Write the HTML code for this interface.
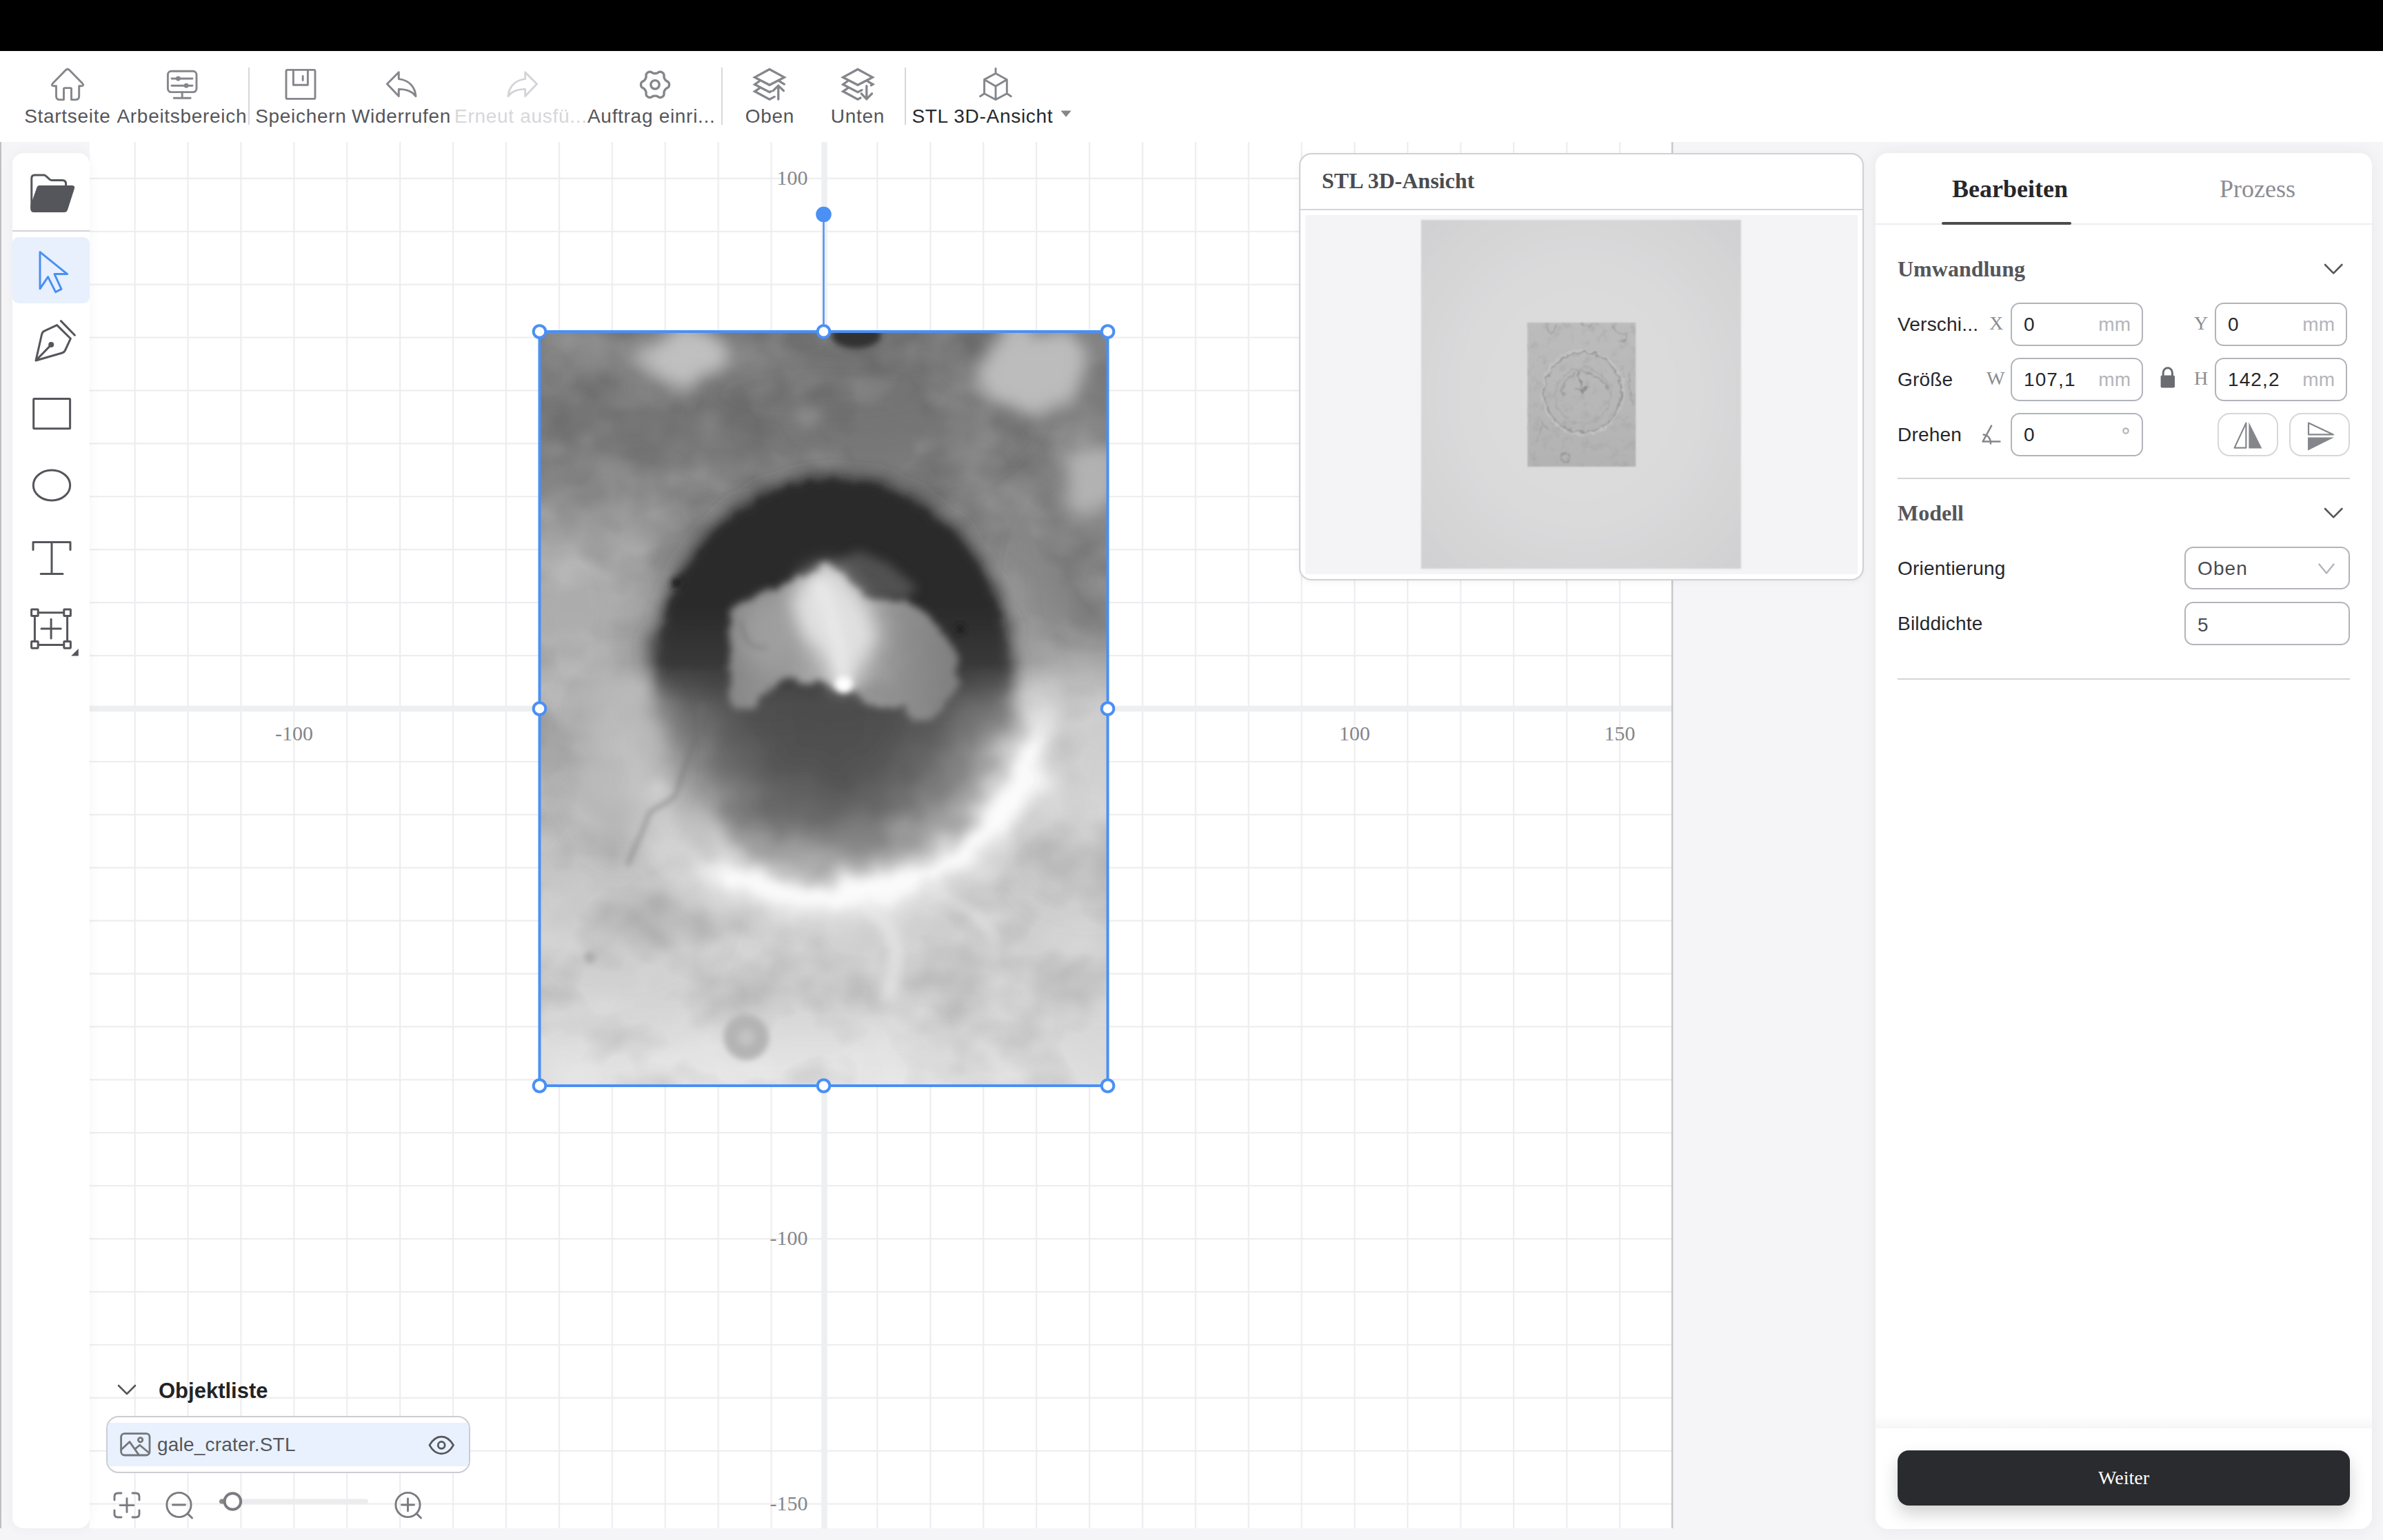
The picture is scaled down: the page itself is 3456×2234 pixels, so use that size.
<!DOCTYPE html>
<html lang="de">
<head>
<meta charset="utf-8">
<title>STL 3D-Ansicht</title>
<style>
*{box-sizing:border-box;margin:0;padding:0}
html,body{width:3456px;height:2234px;overflow:hidden;background:#f5f5f7;font-family:"Liberation Sans",sans-serif;color:#2b2c30}
.abs{position:absolute}
#titlebar{position:absolute;left:0;top:0;width:3456px;height:74px;background:#000}
#toolbar{position:absolute;left:0;top:74px;width:3456px;height:132px;background:#fff}
.tb{position:absolute;top:0;height:132px;width:220px;margin-left:-110px;text-align:center}
.tb svg{position:absolute;left:50%;top:22px;margin-left:-26px;width:52px;height:52px;overflow:visible}
.tb span{position:absolute;left:0;right:0;top:78px;font-size:28px;line-height:34px;color:#55565b;white-space:nowrap;letter-spacing:0.7px;text-indent:0.7px}
.tb.dis span{color:#d6d7db}
.tb.dark span{color:#26272b}
.sep{position:absolute;top:24px;width:2.4px;height:83px;background:#d6d7db}
#canvas{position:absolute;left:130px;top:206px;width:2297px;height:2011px;background:#fff;overflow:hidden}
#leftedge{position:absolute;left:0;top:206px;width:2.4px;height:2011px;background:#c0c0c3}
#sidebar{position:absolute;left:18px;top:222px;width:112px;height:1995px;background:#fff;border-radius:16px;box-shadow:0 0 18px rgba(0,0,0,0.045)}
#sidebar svg{position:absolute;overflow:visible}
#view3d{position:absolute;left:1884px;top:222px;width:819px;height:620px;background:#fff;border:2px solid #cfd1d6;border-radius:18px;box-shadow:0 2px 10px rgba(0,0,0,0.05);overflow:hidden}
#view3d h3{position:absolute;left:31px;top:18px;font-family:"Liberation Serif",serif;font-weight:bold;font-size:32px;line-height:40px;color:#4b4c51}
#view3d .hr{position:absolute;left:0;right:0;top:79px;height:2px;background:#d3d5d9}
#view3d .inner{position:absolute;left:7px;top:88px;width:801px;height:521px;background:#f4f4f6}
#rpanel{position:absolute;left:2720px;top:222px;width:720px;height:1996px;background:#fff;border-radius:18px;box-shadow:0 0 24px rgba(0,0,0,0.06)}
.serif{font-family:"Liberation Serif",serif}
#rpanel .tab1{position:absolute;left:111px;top:30px;font-family:"Liberation Serif",serif;font-weight:bold;font-size:36px;line-height:44px;color:#26272b}
#rpanel .tab2{position:absolute;left:499px;top:30px;font-family:"Liberation Serif",serif;font-size:36px;line-height:44px;color:#8b8c91}
#rpanel .tabline{position:absolute;left:0;right:0;top:102px;height:2px;background:#ededef}
#rpanel .tabul{position:absolute;left:96px;top:100px;width:188px;height:4px;background:#4a4b50;border-radius:2px}
.sect{position:absolute;left:32px;font-family:"Liberation Serif",serif;font-weight:bold;font-size:32px;line-height:40px;color:#55565b}
.lbl{position:absolute;left:32px;font-size:28px;line-height:34px;color:#26272b;white-space:nowrap;letter-spacing:0.2px}
.axis{position:absolute;font-family:"Liberation Serif",serif;font-size:28px;line-height:34px;color:#8b8c91}
.inp{position:absolute;height:63px;border:2px solid #b2b4ba;border-radius:13px;background:#fff}
.inp .v{position:absolute;left:17px;top:13px;font-size:28px;line-height:34px;color:#26272b;letter-spacing:1.1px}
.inp .u{position:absolute;right:16px;top:13px;font-size:28px;line-height:34px;color:#b3b5bb}
.btn{position:absolute;height:63px;width:88px;border:2px solid #d6d7db;border-radius:18px;background:#fff}
.hr2{position:absolute;left:32px;width:656px;height:2px;background:#d3d5d9}
#weiter{position:absolute;left:32px;top:1882px;width:656px;height:80px;background:#2a2b2e;border-radius:16px;color:#fff;font-family:"Liberation Serif",serif;font-size:28px;line-height:80px;text-align:center;box-shadow:0 12px 24px rgba(0,0,0,0.18)}
#footshadow{position:absolute;left:0;right:0;top:1830px;height:20px;background:linear-gradient(to bottom,rgba(0,0,0,0),rgba(0,0,0,0.035))}
#objtitle{position:absolute;left:230px;top:1997.5px;font-size:31px;line-height:40px;font-weight:bold;color:#222326}
#objbox{position:absolute;left:154px;top:2054px;width:528px;height:83px;border:2px solid #cbcdd2;border-radius:18px;background:#fff;overflow:hidden}
#objbox .row{position:absolute;left:0;right:0;top:8px;height:63px;background:#e8f1fd}
#objbox .name{position:absolute;left:72px;top:22px;font-size:28px;line-height:36px;color:#55565b;letter-spacing:0.2px}
</style>
</head>
<body>
<div id="titlebar"></div>
<div id="toolbar">
  <div class="tb " style="left:98.0px"><svg viewBox="-26 -26 52 52" fill="none" stroke="#85868b" stroke-width="2.9" stroke-linecap="round" stroke-linejoin="round"><path d="M-21.6 -1 L-2.8 -20.3 Q0 -23 2.8 -20.3 L21.6 -1 Q24.4 2.7 20 2.7 H16.7 V17.4 Q16.7 22.6 11.5 22.6 H5.5 V7 Q5.5 5.6 4.1 5.6 H-4.1 Q-5.5 5.6 -5.5 7 V22.6 H-11.3 Q-16.5 22.6 -16.5 17.4 V2.7 H-20 Q-24.4 2.7 -21.6 -1 Z"/></svg><span style="left:-0.5px;right:0.5px">Startseite</span></div>
<div class="tb " style="left:264.0px"><svg viewBox="-26 -26 52 52" fill="none" stroke="#85868b" stroke-width="2.9" stroke-linecap="round" stroke-linejoin="round"><rect x="-20.6" y="-18.8" width="41.6" height="30.4" rx="5"/><path d="M0.2 11.6 V20.2 M-11.8 20.2 H12.2 M-15 -8 H15 M-15 2.2 H15"/><circle cx="-5.6" cy="-8" r="3.4" fill="#85868b" stroke="none"/><circle cx="6.2" cy="2.2" r="3.4" fill="#85868b" stroke="none"/></svg><span style="left:-0.5px;right:0.5px">Arbeitsbereich</span></div>
<div class="tb " style="left:436.0px"><svg viewBox="-26 -26 52 52" fill="none" stroke="#85868b" stroke-width="2.9" stroke-linecap="round" stroke-linejoin="round"><rect x="-21" y="-20.6" width="42" height="42" rx="2"/><path d="M-10.6 -20.6 V1.2 H10.4 V-20.6 M3.2 -11.6 V-5.4"/></svg><span style="left:0.0px;right:0.0px">Speichern</span></div>
<div class="tb " style="left:582.0px"><svg viewBox="-26 -26 52 52" fill="none" stroke="#85868b" stroke-width="2.9" stroke-linecap="round" stroke-linejoin="round"><path d="M-3.7 -17.2 L-20.6 -0.2 L-3.7 17.6 V7.4 C8 7.4 16 10.5 21 17.6 C20 4 11 -6 -3.7 -7.4 Z"/></svg><span style="left:-0.4px;right:0.4px">Widerrufen</span></div>
<div class="tb dis" style="left:758.0px"><svg viewBox="-26 -26 52 52" fill="none" stroke="#d3d4d8" stroke-width="2.9" stroke-linecap="round" stroke-linejoin="round"><path d="M3.7 -17.2 L20.6 -0.2 L3.7 17.6 V7.4 C-8 7.4 -16 10.5 -21 17.6 C-20 4 -11 -6 3.7 -7.4 Z"/></svg><span style="left:-3.0px;right:3.0px">Erneut ausf&uuml;...</span></div>
<div class="tb " style="left:950.0px"><svg viewBox="-26 -26 52 52" fill="none" stroke="#85868b" stroke-width="2.9" stroke-linecap="round" stroke-linejoin="round"><g stroke-width="3.4" transform="translate(0 0.8)"><path d="M20.50 0.00 L20.47 0.71 L20.37 1.42 L20.20 2.12 L19.91 2.80 L19.49 3.44 L18.91 4.02 L18.17 4.53 L17.37 4.98 L16.62 5.40 L15.98 5.82 L15.48 6.25 L15.07 6.71 L14.72 7.18 L14.41 7.66 L14.12 8.15 L13.84 8.65 L13.58 9.16 L13.34 9.69 L13.15 10.28 L13.03 10.93 L12.98 11.69 L13.00 12.55 L13.01 13.47 L12.93 14.36 L12.72 15.16 L12.38 15.85 L11.94 16.43 L11.42 16.93 L10.85 17.37 L10.25 17.75 L9.62 18.08 L8.95 18.36 L8.26 18.55 L7.53 18.64 L6.77 18.60 L5.97 18.38 L5.16 18.00 L4.37 17.53 L3.63 17.09 L2.95 16.75 L2.32 16.53 L1.72 16.40 L1.14 16.34 L0.57 16.31 L0.00 16.30 L-0.57 16.31 L-1.14 16.34 L-1.72 16.40 L-2.32 16.53 L-2.95 16.75 L-3.63 17.09 L-4.37 17.53 L-5.16 18.00 L-5.97 18.38 L-6.77 18.60 L-7.53 18.64 L-8.26 18.55 L-8.95 18.36 L-9.62 18.08 L-10.25 17.75 L-10.85 17.37 L-11.42 16.93 L-11.94 16.43 L-12.38 15.85 L-12.72 15.16 L-12.93 14.36 L-13.01 13.47 L-13.00 12.55 L-12.98 11.69 L-13.03 10.93 L-13.15 10.28 L-13.34 9.69 L-13.58 9.16 L-13.84 8.65 L-14.12 8.15 L-14.41 7.66 L-14.72 7.18 L-15.07 6.71 L-15.48 6.25 L-15.98 5.82 L-16.62 5.40 L-17.37 4.98 L-18.17 4.53 L-18.91 4.02 L-19.49 3.44 L-19.91 2.80 L-20.20 2.12 L-20.37 1.42 L-20.47 0.71 L-20.50 0.00 L-20.47 -0.71 L-20.37 -1.42 L-20.20 -2.12 L-19.91 -2.80 L-19.49 -3.44 L-18.91 -4.02 L-18.17 -4.53 L-17.37 -4.98 L-16.62 -5.40 L-15.98 -5.82 L-15.48 -6.25 L-15.07 -6.71 L-14.72 -7.18 L-14.41 -7.66 L-14.12 -8.15 L-13.84 -8.65 L-13.58 -9.16 L-13.34 -9.69 L-13.15 -10.28 L-13.03 -10.93 L-12.98 -11.69 L-13.00 -12.55 L-13.01 -13.47 L-12.93 -14.36 L-12.72 -15.16 L-12.38 -15.85 L-11.94 -16.43 L-11.42 -16.93 L-10.85 -17.37 L-10.25 -17.75 L-9.62 -18.08 L-8.95 -18.36 L-8.26 -18.55 L-7.53 -18.64 L-6.77 -18.60 L-5.97 -18.38 L-5.16 -18.00 L-4.37 -17.53 L-3.63 -17.09 L-2.95 -16.75 L-2.32 -16.53 L-1.72 -16.40 L-1.14 -16.34 L-0.57 -16.31 L-0.00 -16.30 L0.57 -16.31 L1.14 -16.34 L1.72 -16.40 L2.32 -16.53 L2.95 -16.75 L3.63 -17.09 L4.37 -17.53 L5.16 -18.00 L5.97 -18.38 L6.77 -18.60 L7.53 -18.64 L8.26 -18.55 L8.95 -18.36 L9.62 -18.08 L10.25 -17.75 L10.85 -17.37 L11.42 -16.93 L11.94 -16.43 L12.38 -15.85 L12.72 -15.16 L12.93 -14.36 L13.01 -13.47 L13.00 -12.55 L12.98 -11.69 L13.03 -10.93 L13.15 -10.28 L13.34 -9.69 L13.58 -9.16 L13.84 -8.65 L14.12 -8.15 L14.41 -7.66 L14.72 -7.18 L15.07 -6.71 L15.48 -6.25 L15.98 -5.82 L16.62 -5.40 L17.37 -4.98 L18.17 -4.53 L18.91 -4.02 L19.49 -3.44 L19.91 -2.80 L20.20 -2.12 L20.37 -1.42 L20.47 -0.71Z"/><circle cx="0" cy="0" r="6.2"/></g></svg><span style="left:-5.6px;right:5.6px">Auftrag einri...</span></div>
<div class="tb " style="left:1116.0px"><svg viewBox="-26 -26 52 52" fill="none" stroke="#85868b" stroke-width="2.9" stroke-linecap="round" stroke-linejoin="round"><g stroke-width="3.3" stroke-linejoin="miter"><path d="M0 -21.5 L21.4 -9.9 L0 1.3 L-21.4 -9.9 Z M-14.4 -4.5 L-21.4 0.5 L0 11.7 L2.2 10.5 M14.3 -4.1 L21.4 0.1 M-14.4 5.9 L-21.4 10.5 L0 22.1 L7.2 18.4 M12.8 22.1 V3 M5.2 9.6 L12.8 2.2 L20.5 9.6"/></g></svg><span style="left:0.0px;right:0.0px">Oben</span></div>
<div class="tb " style="left:1244.0px"><svg viewBox="-26 -26 52 52" fill="none" stroke="#85868b" stroke-width="2.9" stroke-linecap="round" stroke-linejoin="round"><g stroke-width="3.3" stroke-linejoin="miter"><path d="M0 -21.5 L21.4 -9.9 L0 1.3 L-21.4 -9.9 Z M-14.4 -4.5 L-21.4 0.5 L0 11.7 L6 8.6 M14.3 -4.1 L21.8 0.3 L19.3 1.7 M-14.4 5.9 L-21.4 10.5 L0 22.1 L3.9 20 M12.8 2.6 V21.7 M5.2 13.8 L12.8 21.7 L20.5 13.8"/></g></svg><span style="left:-0.4px;right:0.4px">Unten</span></div>
<div class="tb dark" style="left:1444.0px"><svg viewBox="-26 -26 52 52" fill="none" stroke="#85868b" stroke-width="2.9" stroke-linecap="round" stroke-linejoin="round"><path d="M0 -15.5 L16.3 -6.6 V13.8 L0 22.5 L-16.5 13.8 V-6.6 Z M-16.5 -6.6 L0 3 L16.3 -6.6 M0 3 V22.5 M0 -22.6 V-15.5 M16.3 13.8 L22.3 17.7 M-16.5 13.8 L-22.5 17.7"/></svg><span style="left:-19.5px;right:19.5px">STL 3D-Ansicht</span><svg style="left:204.0px;top:86px;width:16px;height:10px;margin:0" viewBox="0 0 16 10"><path d="M0.4 0.4 H15.6 L8 9.8 Z" fill="#85868b" stroke="none"/></svg></div>
<div class="sep" style="left:359.5px"></div><div class="sep" style="left:1045.5px"></div><div class="sep" style="left:1311.5px"></div>
</div>
<div id="canvas">
  <svg class="abs" style="left:0;top:0" width="2297" height="2011" viewBox="130 206 2297 2011">
<defs><pattern id="grid" patternUnits="userSpaceOnUse" x="1194.40" y="1026.90" width="76.91" height="76.91"><rect x="0" y="0" width="2.2" height="76.91" fill="#ededf0"/><rect x="0" y="0" width="76.91" height="2.2" fill="#ededf0"/></pattern></defs>
<rect x="0" y="206" width="2424" height="2011" fill="#fff"/>
<rect x="0" y="206" width="2424" height="2011" fill="url(#grid)"/>
<rect x="0" y="1023.7" width="2424" height="8.6" fill="#eeeff1"/>
<rect x="1191.2" y="206" width="8.6" height="2011" fill="#eeeff1"/>
<rect x="2424" y="206" width="2.6" height="2011" fill="#c6c8cd"/>
<text x="426.4" y="1074" text-anchor="middle" style="font-family:'Liberation Serif',serif;font-size:30px;fill:#85868b">-100</text>
<text x="1964.6" y="1074" text-anchor="middle" style="font-family:'Liberation Serif',serif;font-size:30px;fill:#85868b">100</text>
<text x="2349.1" y="1074" text-anchor="middle" style="font-family:'Liberation Serif',serif;font-size:30px;fill:#85868b">150</text>
<text x="1171.5" y="267.9" text-anchor="end" style="font-family:'Liberation Serif',serif;font-size:30px;fill:#85868b">100</text>
<text x="1171.5" y="1806.1" text-anchor="end" style="font-family:'Liberation Serif',serif;font-size:30px;fill:#85868b">-100</text>
<text x="1171.5" y="2190.6" text-anchor="end" style="font-family:'Liberation Serif',serif;font-size:30px;fill:#85868b">-150</text>
<defs>
<clipPath id="cclip"><rect x="0" y="0" width="825" height="1094"/></clipPath>
<linearGradient id="cbg" x1="0" y1="0" x2="0" y2="1">
<stop offset="0" stop-color="#767676"/><stop offset="0.18" stop-color="#7e7e7e"/><stop offset="0.45" stop-color="#989898"/><stop offset="0.62" stop-color="#b6b6b6"/><stop offset="0.75" stop-color="#cbcbcb"/><stop offset="1" stop-color="#dcdcdc"/>
</linearGradient>
<linearGradient id="cbowl" gradientUnits="userSpaceOnUse" x1="0" y1="211" x2="0" y2="800">
<stop offset="0" stop-color="#3a3a3a"/><stop offset="0.5" stop-color="#444"/><stop offset="0.72" stop-color="#525252"/><stop offset="0.83" stop-color="#6a6a6a"/><stop offset="0.9" stop-color="#8a8a8a"/><stop offset="0.95" stop-color="#aaa"/><stop offset="1" stop-color="#c8c8c8"/>
</linearGradient>
<linearGradient id="cringfade" gradientUnits="userSpaceOnUse" x1="0" y1="395" x2="0" y2="535">
<stop offset="0" stop-color="#fff"/><stop offset="1" stop-color="#000"/>
</linearGradient>
<mask id="cringmask" maskUnits="userSpaceOnUse" x="0" y="0" width="825" height="1094"><rect x="0" y="0" width="825" height="1094" fill="url(#cringfade)"/></mask>
<linearGradient id="cmound" gradientUnits="userSpaceOnUse" x1="273" y1="0" x2="616" y2="0">
<stop offset="0" stop-color="#868686"/><stop offset="0.25" stop-color="#989898"/><stop offset="0.45" stop-color="#b4b4b4"/><stop offset="0.6" stop-color="#a4a4a4"/><stop offset="0.75" stop-color="#8e8e8e"/><stop offset="1" stop-color="#7c7c7c"/>
</linearGradient>
<radialGradient id="clow">
<stop offset="0" stop-color="#4e4e4e"/><stop offset="0.24" stop-color="#525252"/><stop offset="0.43" stop-color="#686868"/><stop offset="0.55" stop-color="#868686"/><stop offset="0.65" stop-color="#a8a8a8"/><stop offset="0.72" stop-color="#d0d0d0"/><stop offset="0.775" stop-color="#fcfcfc"/><stop offset="0.815" stop-color="#fafafa"/><stop offset="0.87" stop-color="#e2e2e2" stop-opacity="0.9"/><stop offset="1" stop-color="#d4d4d4" stop-opacity="0"/>
</radialGradient>
<linearGradient id="clowfade" gradientUnits="userSpaceOnUse" x1="0" y1="480" x2="0" y2="610">
<stop offset="0" stop-color="#000"/><stop offset="1" stop-color="#fff"/>
</linearGradient>
<mask id="clowmask" maskUnits="userSpaceOnUse" x="0" y="0" width="825" height="1094"><rect x="0" y="0" width="825" height="1094" fill="url(#clowfade)"/></mask>
<filter id="cb4" filterUnits="userSpaceOnUse" x="-60" y="-60" width="945" height="1214"><feGaussianBlur stdDeviation="4"/></filter>
<filter id="cb8" filterUnits="userSpaceOnUse" x="-60" y="-60" width="945" height="1214"><feGaussianBlur stdDeviation="8"/></filter>
<filter id="cb14" filterUnits="userSpaceOnUse" x="-60" y="-60" width="945" height="1214"><feGaussianBlur stdDeviation="14"/></filter>
<filter id="cb25" filterUnits="userSpaceOnUse" x="-100" y="-100" width="1025" height="1294"><feGaussianBlur stdDeviation="25"/></filter>
<filter id="cb40" filterUnits="userSpaceOnUse" x="-150" y="-150" width="1125" height="1394"><feGaussianBlur stdDeviation="40"/></filter>
<filter id="crough" filterUnits="userSpaceOnUse" x="-60" y="-60" width="945" height="1214"><feTurbulence type="fractalNoise" baseFrequency="0.05" numOctaves="3" seed="7" result="n"/><feDisplacementMap in="SourceGraphic" in2="n" scale="22" xChannelSelector="R" yChannelSelector="G"/><feGaussianBlur stdDeviation="3"/></filter>
<filter id="crough5" filterUnits="userSpaceOnUse" x="-60" y="-60" width="945" height="1214"><feTurbulence type="fractalNoise" baseFrequency="0.06" numOctaves="3" seed="7" result="n"/><feDisplacementMap in="SourceGraphic" in2="n" scale="20" xChannelSelector="R" yChannelSelector="G"/><feGaussianBlur stdDeviation="5.5"/></filter>
<filter id="croughL" filterUnits="userSpaceOnUse" x="-60" y="-60" width="945" height="1214"><feTurbulence type="fractalNoise" baseFrequency="0.022" numOctaves="3" seed="29" result="n"/><feDisplacementMap in="SourceGraphic" in2="n" scale="48" xChannelSelector="R" yChannelSelector="G"/><feGaussianBlur stdDeviation="7"/></filter>
<filter id="crough14" filterUnits="userSpaceOnUse" x="-60" y="-60" width="945" height="1214"><feTurbulence type="fractalNoise" baseFrequency="0.03" numOctaves="3" seed="3" result="n"/><feDisplacementMap in="SourceGraphic" in2="n" scale="30" xChannelSelector="R" yChannelSelector="G"/><feGaussianBlur stdDeviation="12"/></filter>
<filter id="crough2" filterUnits="userSpaceOnUse" x="-60" y="-60" width="945" height="1214"><feTurbulence type="fractalNoise" baseFrequency="0.03" numOctaves="3" seed="11" result="n"/><feDisplacementMap in="SourceGraphic" in2="n" scale="40" xChannelSelector="R" yChannelSelector="G"/><feGaussianBlur stdDeviation="7"/></filter>
<filter id="crough3" filterUnits="userSpaceOnUse" x="-60" y="-60" width="945" height="1214"><feTurbulence type="fractalNoise" baseFrequency="0.02" numOctaves="3" seed="17" result="n"/><feDisplacementMap in="SourceGraphic" in2="n" scale="55" xChannelSelector="R" yChannelSelector="G"/><feGaussianBlur stdDeviation="13"/></filter>
<filter id="ctex" filterUnits="userSpaceOnUse" x="0" y="0" width="825" height="1094"><feTurbulence type="fractalNoise" baseFrequency="0.009 0.011" numOctaves="3" seed="5"/><feColorMatrix type="matrix" values="0 0 0 0 1  0 0 0 0 1  0 0 0 0 1  1.8 0 0 0 -0.72"/></filter>
<filter id="ctexd" filterUnits="userSpaceOnUse" x="0" y="0" width="825" height="1094"><feTurbulence type="fractalNoise" baseFrequency="0.009 0.011" numOctaves="3" seed="23"/><feColorMatrix type="matrix" values="0 0 0 0 0  0 0 0 0 0  0 0 0 0 0  1.8 0 0 0 -0.72"/></filter>
</defs>
<g transform="translate(782.5 481)" clip-path="url(#cclip)">
<rect x="0" y="0" width="825" height="1094" fill="url(#cbg)"/>
<!-- regional variation -->
<g filter="url(#cb40)">
<ellipse cx="50" cy="420" rx="120" ry="190" fill="#b2b2b2" opacity="0.85"/>
<ellipse cx="800" cy="640" rx="90" ry="150" fill="#dadada" opacity="0.8"/>
<ellipse cx="420" cy="90" rx="260" ry="100" fill="#727272" opacity="0.7"/>
<ellipse cx="800" cy="360" rx="50" ry="90" fill="#757575" opacity="0.8"/>
<ellipse cx="400" cy="1095" rx="400" ry="60" fill="#e8e8e8" opacity="0.8"/>
<ellipse cx="130" cy="830" rx="90" ry="80" fill="#c2c2c2" opacity="0.6"/>
<ellipse cx="20" cy="60" rx="90" ry="120" fill="#7a7a7a" opacity="0.7"/>
</g>
<rect x="0" y="0" width="825" height="1094" filter="url(#ctex)" opacity="0.22"/>
<rect x="0" y="0" width="825" height="1094" filter="url(#ctexd)" opacity="0.16"/>
<g filter="url(#crough3)">
<ellipse cx="212" cy="38" rx="62" ry="44" fill="#c0c0c0"/>
<ellipse cx="715" cy="55" rx="78" ry="66" fill="#bcbcbc"/>
<ellipse cx="803" cy="215" rx="36" ry="55" fill="#b2b2b2"/>
<ellipse cx="385" cy="120" rx="30" ry="16" fill="#969696"/>
<ellipse cx="240" cy="140" rx="14" ry="22" fill="#999"/>
</g>
<ellipse cx="459" cy="6" rx="36" ry="18" fill="#333" filter="url(#cb4)"/>
<!-- outer rim glow -->
<g filter="url(#crough3)" fill="none">
<path d="M150 470 A290 305 0 0 1 710 470" stroke="#9a9a9a" stroke-width="30" opacity="0.8"/>
</g>
<!-- bowl floor (soft) -->
<ellipse cx="426" cy="503" rx="266" ry="296" fill="url(#cbowl)" filter="url(#crough14)"/>
<g mask="url(#clowmask)"><ellipse cx="420" cy="560" rx="378" ry="328" fill="url(#clow)" filter="url(#croughL)"/></g>
<ellipse cx="205" cy="725" rx="75" ry="45" fill="#bcbcbc" opacity="0.65" filter="url(#cb14)" transform="rotate(35 205 725)"/>
<ellipse cx="118" cy="620" rx="60" ry="130" fill="#b0b0b0" opacity="0.8" filter="url(#cb25)"/>
<path d="M478 832 C520 870 525 900 505 962" stroke="#e8e8e8" stroke-width="22" fill="none" stroke-linecap="round" filter="url(#cb8)" opacity="0.7"/>
<path d="M560 800 C600 830 640 840 660 880" stroke="#e6e6e6" stroke-width="16" fill="none" stroke-linecap="round" filter="url(#cb8)" opacity="0.6"/>
<!-- dark horseshoe ring (sharper) -->
<g mask="url(#cringmask)"><ellipse cx="426" cy="502" rx="255" ry="286" fill="#2c2c2c" filter="url(#crough5)"/></g>
<!-- mound -->
<path d="M430 335 L477 388 L529 388 L548 372 L505 336 L462 318 Z" fill="#525252" filter="url(#cb8)" opacity="0.95"/>
<g filter="url(#crough5)">
<path d="M276 403 L276 527 L286 549 L311 545 L326 524 L342 508 L363 503 L384 511 L404 507 L440 515 L467 531 L488 541 L508 545 L525 539 L540 566 L580 556 L612 507 L602 465 L571 416 L529 388 L477 388 L448 362 L425 340 L415 335 L400 350 L363 362 L321 379 L290 394 Z" fill="url(#cmound)"/>
</g>
<path d="M388 352 L425 338 L474 396 L492 444 L466 486 L450 518 L430 518 L414 474 L376 438 L362 394 Z" fill="#e0e0e0" filter="url(#cb14)"/>
<ellipse cx="330" cy="440" rx="40" ry="50" fill="#a6a6a6" opacity="0.6" filter="url(#cb14)"/>
<path d="M405 368 C420 400 432 440 441 508" stroke="#f0f0f0" stroke-width="16" fill="none" stroke-linecap="round" filter="url(#cb8)" opacity="0.6"/>
<ellipse cx="441" cy="512" rx="13" ry="12" fill="#fff" filter="url(#cb4)"/>
<ellipse cx="495" cy="525" rx="34" ry="16" fill="#8c8c8c" opacity="0.7" filter="url(#cb8)"/>
<path d="M292 420 C296 450 310 462 330 458" stroke="#5a5a5a" stroke-width="2.2" fill="none" filter="url(#cb4)" opacity="0.7"/>
<!-- small features -->
<circle cx="300" cy="1024" r="33" fill="#b4b4b4" filter="url(#cb4)"/>
<circle cx="300" cy="1024" r="12" fill="#c2c2c2" filter="url(#cb4)"/>
<circle cx="73" cy="908" r="8" fill="#aaa" filter="url(#cb4)"/>
<circle cx="199" cy="365" r="8" fill="#1c1c1c" filter="url(#cb4)"/>
<circle cx="610" cy="432" r="7" fill="#1c1c1c" filter="url(#cb4)"/>
<path d="M236 540 C232 590 205 640 198 672 C180 690 165 690 158 700 C150 730 135 750 128 775" stroke="#6e6e6e" stroke-width="3.4" fill="none" filter="url(#cb4)" opacity="0.8"/>
</g>

<g id="sel" fill="none" stroke="#4a90f5">
<line x1="1194.5" y1="311" x2="1194.5" y2="481.0" stroke-width="2.4"/>
<rect x="782.5" y="481.0" width="824.0" height="1094.0" stroke-width="4"/>
<circle cx="1194.5" cy="311" r="11.3" fill="#4a90f5" stroke="none"/>
<circle cx="782.5" cy="481.0" r="8.8" fill="#fff" stroke-width="4"/>
<circle cx="1194.5" cy="481.0" r="8.8" fill="#fff" stroke-width="4"/>
<circle cx="1606.5" cy="481.0" r="8.8" fill="#fff" stroke-width="4"/>
<circle cx="782.5" cy="1028.0" r="8.8" fill="#fff" stroke-width="4"/>
<circle cx="1606.5" cy="1028.0" r="8.8" fill="#fff" stroke-width="4"/>
<circle cx="782.5" cy="1575.0" r="8.8" fill="#fff" stroke-width="4"/>
<circle cx="1194.5" cy="1575.0" r="8.8" fill="#fff" stroke-width="4"/>
<circle cx="1606.5" cy="1575.0" r="8.8" fill="#fff" stroke-width="4"/>
</g>
</svg>
</div>
<div id="leftedge"></div>
<div id="sidebar">
  <div class="abs" style="left:0;top:112px;width:112px;height:2px;background:#d2d3d7"></div>
<div class="abs" style="left:0;top:122px;width:112px;height:96px;background:#e7f0fc;border-radius:9px"></div>
<svg style="left:0;top:0" width="112" height="760" viewBox="0 0 112 760" fill="none" stroke="#55565b" stroke-width="3" stroke-linecap="round" stroke-linejoin="round">
<!-- folder -->
<path d="M27.8 80 V36.6 Q27.8 31.9 32.5 31.9 H45.5 Q47 31.9 48.2 33 L54.2 38.4 Q55.3 39.4 57 39.4 H72.5 Q77.6 39.4 77.6 44.5 V48"/>
<path d="M38.8 47 H86 Q91.5 47 89.8 52 L80 82.4 Q78.8 85.9 75 85.9 H31 Q26.3 85.9 26.3 81.2 V76 L35.4 50 Q36.4 47 38.8 47 Z" fill="#55565b" stroke="none"/>
<!-- arrow -->
<path d="M40 143.6 V196.8 L51.6 179.6 L62.6 201.6 L71 197.4 L61 175.6 H79.6 Z" stroke="#4a8ff5"/>
<!-- pen -->
<path d="M34 301 L42.6 263 Q43.4 259.6 46.4 258.2 L64.6 249.6 L84.4 269.2 L76.6 286 Q75.2 289 72 290 Z M34 301 L54 280.4 M70.4 243.6 L90.4 264.2"/>
<circle cx="56.2" cy="278" r="4" fill="#55565b" stroke="none"/>
<!-- rect -->
<rect x="30.7" y="356.5" width="52.9" height="43.2" rx="1"/>
<!-- ellipse -->
<ellipse cx="57" cy="482" rx="26.7" ry="21.9"/>
<!-- T -->
<path d="M30 575.4 V564.4 H84 V575.4 M57 564.4 V610.6 M41.2 610.6 H73"/>
<!-- frame plus -->
<path d="M38.4 666.8 H73.6 M38.4 713.4 H73.6 M32.4 672.8 V707.4 M79.6 672.8 V707.4 M42 690 H70.2 M56.1 676.2 V704"/>
<rect x="27.6" y="662" width="9.6" height="9.6" rx="0.6"/><rect x="74.8" y="662" width="9.6" height="9.6" rx="0.6"/><rect x="27.6" y="708.6" width="9.6" height="9.6" rx="0.6"/><rect x="74.8" y="708.6" width="9.6" height="9.6" rx="0.6"/>
<path d="M85.2 729.4 H95.8 V719 Z" fill="#55565b" stroke="none"/>
</svg>

</div>
<svg class="abs" style="left:160px;top:2000px" width="50" height="40" viewBox="160 2000 50 40" fill="none" stroke="#55565b" stroke-width="2.6" stroke-linecap="round" stroke-linejoin="round"><path d="M172 2010 L184 2022 L196 2010"/></svg>
<div id="objtitle">Objektliste</div>
<div id="objbox"><div class="row"></div>
<svg class="abs" style="left:18px;top:22px" width="46" height="36" viewBox="0 0 46 36" fill="none" stroke="#75767b" stroke-width="2.8" stroke-linecap="round" stroke-linejoin="round"><rect x="1.6" y="1.6" width="41.4" height="31.4" rx="5"/><circle cx="29.6" cy="10.8" r="3.2"/><path d="M1.8 25 L14 13.6 L27.4 32.6 M21.5 24.4 L28.6 18.2 L42.6 30"/></svg>
<div class="name">gale_crater.STL</div>
<svg class="abs" style="left:465px;top:25px" width="40" height="32.4" viewBox="0 0 42 34" fill="none" stroke="#55565b" stroke-width="2.9" stroke-linecap="round" stroke-linejoin="round"><path d="M2 16.2 C8 5.4 15 3.2 20.2 3.2 C25.4 3.2 32.4 5.4 38.4 16.2 C32.4 27 25.4 29.2 20.2 29.2 C15 29.2 8 27 2 16.2 Z"/><circle cx="20.2" cy="16.2" r="5.2"/></svg>
</div>
<svg class="abs" style="left:150px;top:2150px" width="500" height="66" viewBox="150 2150 500 66" fill="none" stroke="#7a7b80" stroke-width="2.9" stroke-linecap="round" stroke-linejoin="round">
<path d="M166 2176 V2171 Q166 2166 171 2166 H176 M192 2166 H197 Q202 2166 202 2171 V2176 M202 2191 V2196 Q202 2201 197 2201 H192 M176 2201 H171 Q166 2201 166 2196 V2191 M174 2183.6 H194 M184 2173.6 V2193.6"/>
<circle cx="259.5" cy="2183" r="17.6"/><path d="M250.5 2183 H268.5 M272 2195.6 L278.5 2202"/>
<circle cx="591.5" cy="2183" r="17.6"/><path d="M582.5 2183 H600.5 M591.5 2174 V2192 M604 2195.6 L610.5 2202"/>
<rect x="318" y="2174.5" width="216" height="7" rx="3.5" fill="#ececee" stroke="none"/>
<rect x="318" y="2174.5" width="16" height="7" rx="3.5" fill="#8a8b90" stroke="none"/>
<circle cx="337.4" cy="2178" r="11.8" fill="#fff" stroke="#7b7c81" stroke-width="4"/>
</svg>

<div id="view3d">
  <h3>STL 3D-Ansicht</h3>
  <div class="hr"></div>
  <div class="inner">
  <svg class="abs" style="left:0;top:0" width="801" height="521" viewBox="0 0 801 521">
<defs>
<radialGradient id="v3bg" cx="0.5" cy="0.5" r="0.75"><stop offset="0" stop-color="#dededf"/><stop offset="0.55" stop-color="#d9d9da"/><stop offset="1" stop-color="#cfcfd1"/></radialGradient>
<linearGradient id="v3m" x1="0" y1="0" x2="0" y2="1"><stop offset="0" stop-color="#bcbcbc"/><stop offset="1" stop-color="#b3b3b3"/></linearGradient>
<filter id="v3b1" filterUnits="userSpaceOnUse" x="0" y="0" width="801" height="521"><feGaussianBlur stdDeviation="1.1"/></filter>
<filter id="v3r" filterUnits="userSpaceOnUse" x="300" y="140" width="200" height="240"><feTurbulence type="fractalNoise" baseFrequency="0.12" numOctaves="2" seed="4" result="n"/><feDisplacementMap in="SourceGraphic" in2="n" scale="10" xChannelSelector="R" yChannelSelector="G"/><feGaussianBlur stdDeviation="1"/></filter>
<filter id="v3t" filterUnits="userSpaceOnUse" x="321" y="156" width="158" height="209"><feTurbulence type="fractalNoise" baseFrequency="0.07" numOctaves="3" seed="9"/><feColorMatrix type="matrix" values="0 0 0 0 0.35  0 0 0 0 0.35  0 0 0 0 0.35  2.4 0 0 0 -1.25"/></filter>
</defs>
<rect x="168" y="7" width="464" height="506" fill="url(#v3bg)" filter="url(#v3b1)"/>
<rect x="322.3" y="156" width="157" height="209" fill="url(#v3m)" filter="url(#v3b1)"/>
<rect x="322.3" y="156" width="157" height="209" filter="url(#v3t)" opacity="0.5"/>
<g fill="none" stroke="#8c8c8c" stroke-width="1.8" filter="url(#v3r)" stroke-linecap="round">
<ellipse cx="402.5" cy="257" rx="59" ry="61" stroke="#c4c4c4" stroke-width="2.4"/><ellipse cx="402.5" cy="257" rx="56" ry="58" stroke="#929292"/><ellipse cx="402.5" cy="262" rx="40" ry="40" stroke="#a6a6a6" stroke-width="1.4"/>
<path d="M374 262 C372 244 384 232 397 226 C412 228 428 236 440 252" stroke="#999"/>
<path d="M395 228 C400 240 402 250 404 258 M392 252 L404 258 L408 248" stroke="#888"/>
<circle cx="378" cy="352" r="6.5" stroke="#929292"/>
<path d="M350 160 L356 172 L364 160 M400 158 C404 164 412 164 416 158 M446 160 C450 170 458 176 466 170 C468 178 462 186 456 182 M470 230 C474 250 468 262 476 276 M346 300 L336 330 M345 300 L352 312" stroke="#9c9c9c" stroke-width="1.5"/>
</g>
</svg>

  </div>
</div>
<div id="rpanel">
  <div class="tab1">Bearbeiten</div>
<div class="tab2">Prozess</div>
<div class="tabline"></div>
<div class="tabul"></div>

<div class="sect" style="top:148px">Umwandlung</div>
<svg class="abs" style="left:640px;top:150px" width="50" height="40" viewBox="0 0 50 40" fill="none" stroke="#55565b" stroke-width="2.6" stroke-linecap="round" stroke-linejoin="round"><path d="M12 12 L24.2 24.4 L36.4 12"/></svg>

<div class="lbl" style="top:232px">Verschi...</div>
<div class="axis" style="left:165px;top:230px">X</div>
<div class="inp" style="left:196px;top:217px;width:192px"><span class="v">0</span><span class="u">mm</span></div>
<div class="axis" style="left:462px;top:230px">Y</div>
<div class="inp" style="left:492px;top:217px;width:192px"><span class="v">0</span><span class="u">mm</span></div>

<div class="lbl" style="top:312px">Gr&ouml;&szlig;e</div>
<div class="axis" style="left:161px;top:310px">W</div>
<div class="inp" style="left:196px;top:297px;width:192px"><span class="v">107,1</span><span class="u">mm</span></div>
<svg class="abs" style="left:412px;top:308px" width="24" height="36" viewBox="0 0 24 36"><path d="M5.2 15 V10.4 A6.6 6.6 0 0 1 18.4 10.4 V15" fill="none" stroke="#6b6c71" stroke-width="3"/><rect x="1.6" y="14.4" width="20.4" height="18" rx="2" fill="#6b6c71"/></svg>
<div class="axis" style="left:462px;top:310px">H</div>
<div class="inp" style="left:492px;top:297px;width:192px"><span class="v">142,2</span><span class="u">mm</span></div>

<div class="lbl" style="top:392px">Drehen</div>
<svg class="abs" style="left:154px;top:394px" width="30" height="30" viewBox="0 0 30 30" fill="none" stroke="#85868b" stroke-width="2.5" stroke-linecap="round" stroke-linejoin="round"><path d="M14.1 1.6 L1.6 24.6 H26.4 M2.6 14.4 C9 15 13 20 13 27.4"/></svg>
<div class="inp" style="left:196px;top:377px;width:192px"><span class="v">0</span><svg class="abs" style="left:159px;top:18px" width="12" height="12" viewBox="0 0 12 12"><circle cx="6" cy="6" r="3.7" fill="none" stroke="#b3b5bb" stroke-width="2.2"/></svg></div>
<div class="btn" style="left:496px;top:377px"><svg class="abs" style="left:20px;top:11px" width="44" height="40" viewBox="0 0 44 40"><path d="M19.4 1.6 V37.6 H2.6 Z" fill="none" stroke="#85868b" stroke-width="2.2" stroke-linejoin="round"/><path d="M23.4 0.6 V38.6 H42.4 Z" fill="#85868b"/></svg></div>
<div class="btn" style="left:600px;top:377px"><svg class="abs" style="left:24px;top:10px" width="42" height="44" viewBox="0 0 42 44"><path d="M2 19.4 H38 L2 2.6 Z" fill="none" stroke="#85868b" stroke-width="2.2" stroke-linejoin="round"/><path d="M1 23.4 H39 L1 42.4 Z" fill="#85868b"/></svg></div>

<div class="hr2" style="top:471px"></div>

<div class="sect" style="top:502px">Modell</div>
<svg class="abs" style="left:640px;top:504px" width="50" height="40" viewBox="0 0 50 40" fill="none" stroke="#55565b" stroke-width="2.6" stroke-linecap="round" stroke-linejoin="round"><path d="M12 12 L24.2 24.4 L36.4 12"/></svg>

<div class="lbl" style="top:586px">Orientierung</div>
<div class="inp" style="left:448px;top:571px;width:240px;height:62px"><span class="v" style="color:#4a4b50">Oben</span><svg class="abs" style="right:18px;top:20px" width="28" height="20" viewBox="0 0 28 20" fill="none" stroke="#b3b5bb" stroke-width="2.4" stroke-linecap="round" stroke-linejoin="round"><path d="M3.4 3.4 L14 16.4 L24.6 3.4"/></svg></div>
<div class="lbl" style="top:666px">Bilddichte</div>
<div class="inp" style="left:448px;top:651px;width:240px;height:63px"><span class="v" style="color:#4a4b50;top:15px">5</span></div>

<div class="hr2" style="top:762px"></div>
<div id="footshadow"></div>
<div id="weiter">Weiter</div>

</div>
</body>
</html>
